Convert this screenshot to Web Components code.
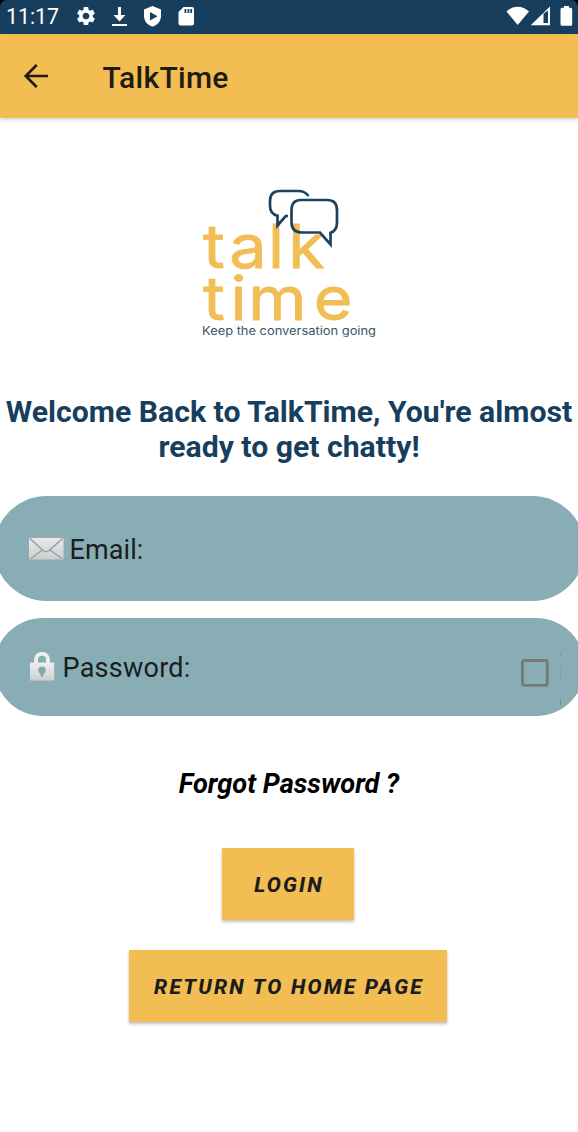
<!DOCTYPE html>
<html lang="en">
<head>
<meta charset="utf-8">
<title>TalkTime</title>
<style>
html,body{margin:0;padding:0;background:#fff}
body{font-family:Roboto,sans-serif;width:578px;height:1132px;overflow:hidden}
</style>
</head>
<body>
<talk-app></talk-app>
<script>
const define = (name, html) => customElements.define(name, class extends HTMLElement {
  constructor() {
    super();
    const t = document.createElement('template');
    t.innerHTML = html;
    this.attachShadow({mode: 'open'}).appendChild(t.content.cloneNode(true));
  }
});

define('status-bar', `
<style>
:host{display:block;height:34px;background:#000}
.bar{box-sizing:border-box;height:34px;background:#173f5d;border-radius:7px 7px 0 0;display:flex;align-items:center;padding-left:6px;color:#fff}
.time{width:70px;font-size:21.300px;line-height:32px}
svg{display:block;flex:none;fill:#fff}
.sp{flex:1}
</style>
<div class="bar"><span class="time">11:17</span>
<svg width="124" height="34" viewBox="76 0 124 34">
<g transform="translate(74.7 4.800) scale(.94)"><path d="M19.14 12.94c.04-.3.06-.61.06-.94 0-.32-.02-.64-.07-.94l2.03-1.58c.18-.14.23-.41.12-.61l-1.92-3.32c-.12-.22-.37-.29-.59-.22l-2.39.96c-.5-.38-1.03-.7-1.62-.94l-.36-2.54c-.04-.24-.24-.41-.48-.41h-3.84c-.24 0-.43.17-.47.41l-.36 2.54c-.59.24-1.13.57-1.62.94l-2.39-.96c-.22-.08-.47 0-.59.22L2.74 8.87c-.12.21-.08.47.12.61l2.03 1.58c-.05.3-.09.63-.09.94s.02.64.07.94l-2.03 1.58c-.18.14-.23.41-.12.61l1.92 3.32c.12.22.37.29.59.22l2.39-.96c.5.38 1.03.7 1.62.94l.36 2.54c.05.24.24.41.48.41h3.84c.24 0 .44-.17.47-.41l.36-2.54c.59-.24 1.13-.56 1.62-.94l2.39.96c.22.08.47 0 .59-.22l1.92-3.32c.12-.22.07-.47-.12-.61l-2.01-1.58zM12 15.6c-1.98 0-3.6-1.62-3.6-3.6s1.62-3.6 3.6-3.6 3.6 1.62 3.6 3.6-1.62 3.6-3.6 3.6z"/></g>
<path d="M118 7h3v8h4.500l-6 6.500-6-6.500h4.500zM112 24h15v2h-15z"/>
<path fill-rule="evenodd" d="M152.500 6l8.500 3.500v6.500c0 5-3.600 9.200-8.500 10.500-4.900-1.300-8.500-5.500-8.500-10.500V9.500zM150 12v8.500l7.500-4.200z"/>
<path fill-rule="evenodd" d="M183.500 7H192q2 0 2 2v14.500q0 2-2 2h-11.500q-2 0-2-2V12zM184.500 9v4h1.800V9zM187.500 9v4h1.800V9zM190.300 9v4h1.800V9z"/>
</svg><span class="sp"></span>
<svg width="78" height="34" viewBox="500 0 78 34">
<path d="M506.500 11.500C513 5.200 522.500 5.200 529 11.500L517.700 25z"/>
<path fill-rule="evenodd" d="M550 6.500V25.300H530.700zM543.500 13.500V23h4.500V10.500z"/>
<path d="M564 6h5v1.700h1.700q1.500 0 1.500 1.500v15q0 1.500-1.500 1.500h-8.700q-1.500 0-1.500-1.500v-15q0-1.500 1.500-1.500h2z"/>
</svg></div>`);

define('app-bar', `
<style>
:host{display:flex;align-items:center;height:84px;background:#f2bd52;box-shadow:0 1px 5px rgba(0,0,0,.22);color:#1f1b10}
svg{display:block;margin-left:18px;flex:none}
.title{margin-left:48.500px;font-size:30px;font-weight:500;line-height:36px;padding-top:3px;letter-spacing:.28px}
</style>
<svg width="36" height="84" viewBox="18 34 36 84" fill="none" stroke="#1f1b10" stroke-width="2.600"><path d="M48 76H26M36.700 65L25.700 76l11 11"/></svg>
<span class="title"><slot></slot></span>`);

define('talk-logo', `
<style>
:host{display:block}
svg{display:block}
text{font-family:Inter,sans-serif}
</style>
<svg width="200" height="170" viewBox="190 180 200 170">
<g fill="#f1bd55" stroke="#f1bd55" stroke-width=".8" font-size="61" transform="scale(1.09 1)">
<text y="268" x="186.200 210.400 245.800 264.400">talk</text>
<text y="320.500" x="186.200 211.500 227.700 287.800">time</text></g>
<text x="202" y="335" font-size="11.200" fill="#365468" textLength="174" lengthAdjust="spacingAndGlyphs">Keep the conversation going</text>
<g fill="none" stroke="#1b4361" stroke-width="2.700" stroke-linejoin="miter">
<path d="M308.500 196Q305 191 298.500 191H280Q270 191 270 201V206Q270 214 277.500 215.700V225.500L285.700 216H288"/>
<path d="M301 200H327Q337 200 337 210V222Q337 231 330.500 232.700V244.500L320 232.500H302Q291.500 232.500 291.500 222V210Q291.500 200 301 200Z"/></g>
</svg>`);

define('pill-field', `
<style>
:host{display:flex;align-items:center;box-sizing:border-box;width:591px;margin-left:-6.500px;padding-left:34.500px;background:#88adb5;border-radius:53px;font-size:27px;line-height:32px;color:#1b1c1e}
.label{padding-top:2px;letter-spacing:var(--label-spacing,.1px)}
.end{margin-left:auto;margin-right:36px}
</style>
<slot name="icon"></slot><span class="label"><slot></slot></span><span class="end"><slot name="end"></slot></span>`);

define('mail-icon', `
<style>:host{display:block;margin-right:5.500px}svg{display:block}</style>
<svg width="36" height="26" viewBox="28 536 36 26"><defs><linearGradient id="g" x2="0" y2="1"><stop stop-color="#e9e9e9"/><stop offset="1" stop-color="#cfcfcf"/></linearGradient></defs>
<rect x="29" y="537.500" width="34.500" height="22" rx="1" fill="url(#g)"/>
<path d="M29.500 538L43 550.500q3 2.500 6.200 0L63 538M30 559l12.500-9M62.500 559L50 550" fill="none" stroke="#84a5aa" stroke-width="1.400"/>
<path d="M30 537.500h32.500" stroke="#aaa7a7"/><path d="M29 559.300h34.500" stroke="#b9b9b9"/></svg>`);

define('lock-icon', `
<style>:host{display:block;margin-right:6.500px}svg{display:block}</style>
<svg width="28" height="30" viewBox="28 651 28 30"><defs><linearGradient id="g" x2="0" y2="1"><stop stop-color="#eee"/><stop offset="1" stop-color="#d0d0d0"/></linearGradient></defs>
<path d="M36 663v-4.500a6 5.700 0 0 1 12 0V663" fill="none" stroke="#efefef" stroke-width="3.900"/>
<rect x="30" y="661.500" width="24.200" height="18" rx="1" fill="url(#g)"/><path d="M30 679.300h24" stroke="#bcbcbc"/>
<circle cx="42" cy="669.300" r="3.700" fill="#86a9b0"/><path d="M40.500 670h3v5q-1.500 2-3 0z" fill="#86a9b0"/></svg>`);

define('check-box', `
<style>:host{display:block;padding-top:12px}svg{display:block}</style>
<svg width="28" height="28" fill="none" stroke="#787878" stroke-width="2.800"><rect x="1.500" y="1.500" width="24.800" height="24.800" rx="1.800"/></svg>`);

define('material-button', `
<style>
:host{display:flex;align-items:center;justify-content:center;box-sizing:border-box;height:72px;padding:2px 0 0 2px;background:#f2bd52;box-shadow:0 2px 3px rgba(0,0,0,.25);color:#1b1c1e;font:italic 800 21px/26px Roboto,sans-serif;white-space:nowrap}
</style><span><slot></slot></span>`);

define('talk-app', `
<style>
:host{display:flex;flex-direction:column;width:578px;height:1132px;background:#fff}
talk-logo{margin:62px 0 0 190px}
h1{margin:43.500px 0 0;font-size:30.200px;line-height:35px;font-weight:700;text-align:center;color:#173f5d;white-space:nowrap}
.email{height:105px;margin-top:32.500px}
.password{height:98px;margin-top:16.500px;--label-spacing:.25px}
.edge{flex:none;width:1px;height:60px;background:linear-gradient(#7b9fa7 2px,transparent 2px 8px,#6d8f95 8px 10px,transparent 10px 22px,#80a4ac 22px 37px,transparent 37px 55px,#6d8b90 55px)}
.end{display:flex;align-items:center;gap:11px;margin-right:-12px}
.end .edge{margin-top:16px}
.forgot{margin-top:51px;text-align:center;font:italic 700 27.200px/34px Roboto,sans-serif;color:#000}
.login{width:132px;margin:47px 0 0 222px;letter-spacing:2.150px}
.home{width:318px;margin:30px 0 0 129px;letter-spacing:2.200px}
</style>
<status-bar></status-bar>
<app-bar>TalkTime</app-bar>
<talk-logo></talk-logo>
<h1>Welcome Back to TalkTime, You're almost<br>ready to get chatty!</h1>
<pill-field class="email"><mail-icon slot="icon"></mail-icon>Email:</pill-field>
<pill-field class="password"><lock-icon slot="icon"></lock-icon>Password:<div class="end" slot="end"><check-box></check-box><span class="edge"></span></div></pill-field>
<div class="forgot">Forgot Password ?</div>
<material-button class="login">LOGIN</material-button>
<material-button class="home">RETURN TO HOME PAGE</material-button>`);
</script>
</body>
</html>
